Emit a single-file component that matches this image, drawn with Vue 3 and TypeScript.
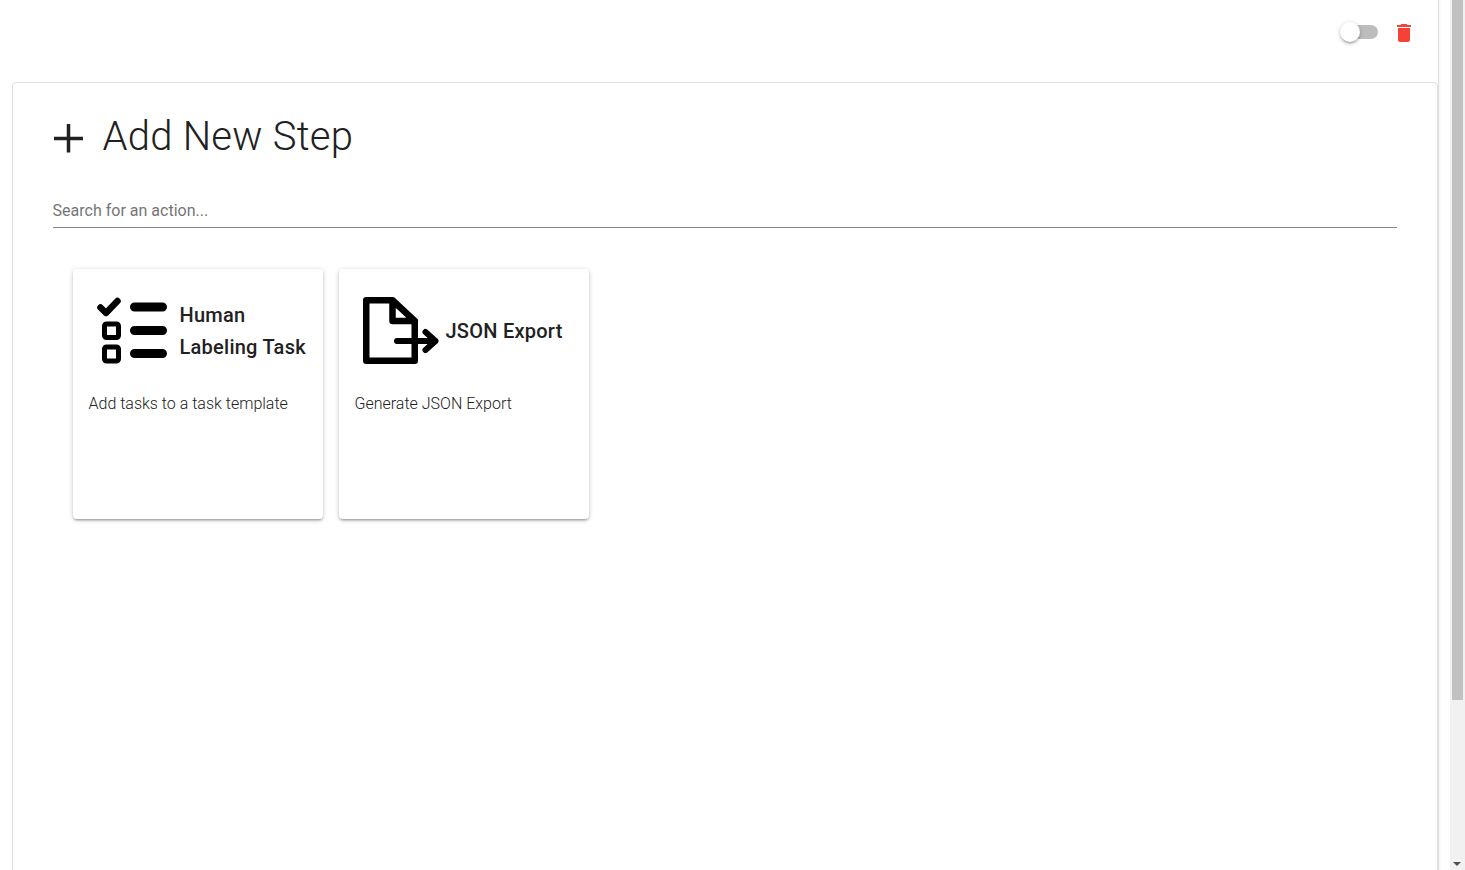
<script setup lang="ts">
interface Action { title: string[]; desc: string; kind: 'task' | 'json' }
const actions: Action[] = [
  { title: ['Human', 'Labeling Task'], desc: 'Add tasks to a task template', kind: 'task' },
  { title: ['JSON Export'], desc: 'Generate JSON Export', kind: 'json' },
]
</script>

<template>
  <div class="page">
    <div class="main">
      <div class="sheet">
        <header class="top">
          <div class="switch"><span class="track"></span><span class="thumb"></span></div>
          <button class="trash" aria-label="Delete">
            <svg width="24" height="24" viewBox="0 0 24 24"><path fill="#f44336" d="M6 19c0 1.1.9 2 2 2h8c1.1 0 2-.9 2-2V7H6v12zM19 4h-3.500l-1-1h-5l-1 1H5v2h14V4z"/></svg>
          </button>
        </header>
        <section class="panel">
          <h1 class="title">
            <svg class="plus" width="31" height="30" viewBox="0 0 31 30"><path d="M15.500 0v28.500M1 14.500h29" stroke="#212121" stroke-width="3.500" fill="none"/></svg>
            <span>Add New Step</span>
          </h1>
          <input class="search" placeholder="Search for an action..." />
          <div class="cards">
            <article v-for="a in actions" :key="a.desc" class="card">
              <div class="head">
                <svg v-if="a.kind === 'task'" class="icon" width="80" height="68" viewBox="0 0 80 68" fill="none" stroke="#000">
                  <path d="M4.500 10.500l5.500 5.500L21.500 4" stroke-width="6.500" stroke-linecap="round" stroke-linejoin="round"/>
                  <path d="M38.500 10h28M38.500 33.500h28M38.500 56.500h28" stroke-width="9" stroke-linecap="round"/>
                  <rect x="8.500" y="27" width="14" height="13.500" rx="2" stroke-width="5"/>
                  <rect x="8.500" y="50" width="14" height="14" rx="2" stroke-width="5"/>
                </svg>
                <svg v-else class="icon" width="80" height="68" viewBox="0 0 80 68" fill="none" stroke="#000" stroke-linecap="round" stroke-linejoin="round">
                  <path d="M52.750 24V63.750H4.250V3.250H30.500L52.750 24H30.500V3.250" stroke-width="6.500"/>
                  <path d="M35 44H73.500M63.500 35L73.500 44L63.500 53" stroke-width="6"/>
                </svg>
                <h2 class="name"><span v-for="t in a.title" :key="t">{{ t }}</span></h2>
              </div>
              <p class="desc">{{ a.desc }}</p>
            </article>
          </div>
        </section>
      </div>
    </div>
    <div class="scrollbar">
      <div class="scroll-thumb"></div>
      <span class="arrow"></span>
    </div>
  </div>
</template>

<style>
html, body { margin: 0; height: 100%; overflow: hidden; background: #fff; }
</style>

<style scoped>
.page {
  display: flex;
  height: 870px;
  overflow: hidden;
  font-family: Roboto, "Liberation Sans", sans-serif;
  color: #212121;
}
.main { flex: 1; min-width: 0; }
.sheet {
  width: 1438px;
  height: 870px;
  border-right: 1px solid #e0e0e0;
  box-shadow: 1px 0 2px rgba(0, 0, 0, 0.06);
  box-sizing: content-box;
}
.top {
  height: 82px;
  display: flex;
  align-items: flex-start;
  justify-content: flex-end;
  padding-right: 22px;
  box-sizing: border-box;
}
.switch {
  position: relative;
  width: 38px;
  height: 14px;
  margin: 25px 14px 0 0;
}
.track {
  position: absolute;
  right: 0;
  top: 0;
  width: 34px;
  height: 14px;
  border-radius: 7px;
  background: #bdbdbd;
}
.thumb {
  position: absolute;
  left: 0;
  top: -3px;
  width: 20px;
  height: 20px;
  border-radius: 50%;
  background: #fff;
  box-shadow: 0 1px 5px rgba(0,0,0,.2), 0 2px 2px rgba(0,0,0,.14), 0 3px 1px -2px rgba(0,0,0,.12);
}
.trash {
  border: 0;
  padding: 0;
  background: none;
  width: 24px;
  height: 24px;
  margin-top: 21px;
  display: block;
}
.panel {
  margin-left: 12px;
  width: 1426px;
  height: 800px;
  box-sizing: border-box;
  border: 1px solid #e0e0e0;
  border-radius: 4px;
  padding: 0 40px;
}
.title {
  display: flex;
  align-items: center;
  margin: 0;
  padding-top: 30px;
  height: 48px;
  font-size: 40px;
  font-weight: 300;
  line-height: 48px;
  letter-spacing: .25px;
  box-sizing: content-box;
}
.plus { margin: 4px 18.500px 0 0; }
.search {
  display: block;
  width: 100%;
  box-sizing: border-box;
  margin-top: 31px;
  height: 36px;
  padding: 2px 0 0;
  border: 0;
  border-bottom: 1px solid #888;
  outline: none;
  font: 400 16px Roboto, sans-serif;
  text-indent: -0.4px;
  color: #212121;
  background: none;
}
.search::placeholder { color: #757575; opacity: 1; }
.cards {
  display: flex;
  gap: 16px;
  padding: 41px 20px 0;
}
.card {
  width: 250px;
  height: 250px;
  box-sizing: border-box;
  padding: 16px 16px 16px 15.500px;
  border-radius: 4px;
  background: #fff;
  box-shadow: 0 1px 5px rgba(0,0,0,.2), 0 2px 2px rgba(0,0,0,.14), 0 3px 1px -2px rgba(0,0,0,.12);
}
.head {
  display: flex;
  align-items: center;
  height: 64px;
  margin-top: 14px;
}
.icon { flex: none; margin-left: 7.500px; }
.name {
  display: flex;
  flex-direction: column;
  margin: 0 0 0 3.500px;
  font-size: 20px;
  font-weight: 500;
  line-height: 32px;
  letter-spacing: .25px;
  white-space: nowrap;
}
.desc {
  margin: 29px 0 0;
  font-size: 16px;
  font-weight: 300;
  line-height: 24px;
}
.scrollbar {
  position: relative;
  flex: none;
  width: 15px;
  background: #f1f1f1;
}
.scroll-thumb {
  position: absolute;
  top: 0;
  left: 2px;
  width: 11px;
  height: 700px;
  background: #c1c1c1;
}
.arrow {
  position: absolute;
  left: 3px;
  bottom: 4px;
  width: 0;
  height: 0;
  border-left: 4px solid transparent;
  border-right: 4px solid transparent;
  border-top: 4px solid #505050;
}
</style>
